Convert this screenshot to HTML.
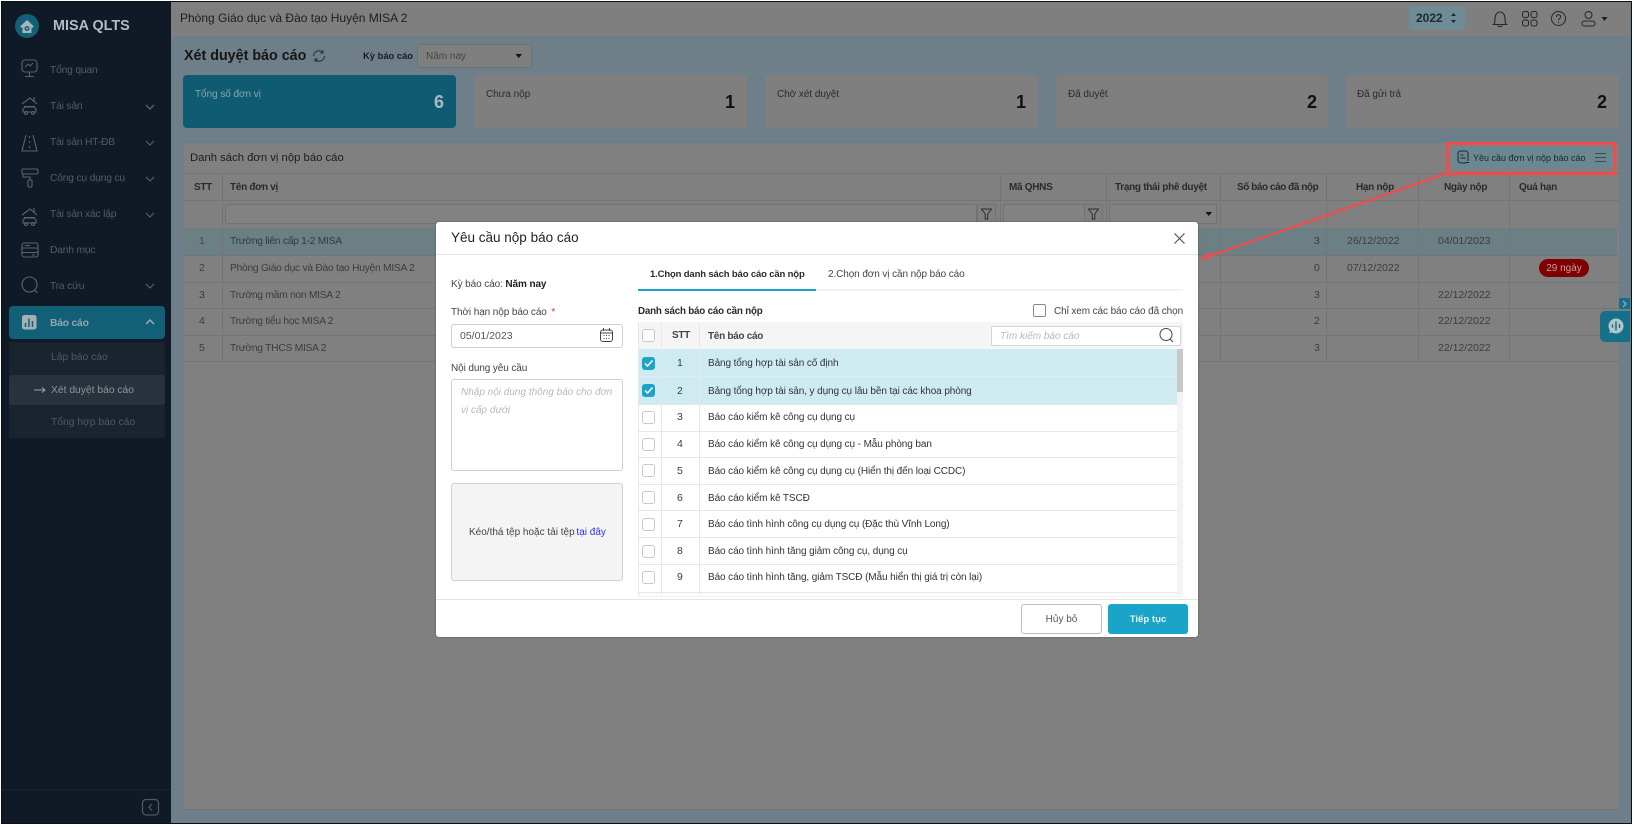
<!DOCTYPE html>
<html lang="vi"><head><meta charset="utf-8"><title>MISA QLTS</title>
<style>
html,body{margin:0;padding:0;background:#fff;width:1634px;height:827px;overflow:hidden}
*{box-sizing:border-box}
body{font-family:"Liberation Sans","Noto Sans CJK SC",sans-serif;font-size:11px;color:#333}
.a,.t{position:absolute}
.t{white-space:nowrap;line-height:14px;height:14px}
svg{position:absolute;overflow:visible}
.m{color:#525c66;font-size:10.3px;letter-spacing:-.2px;line-height:16px}
.h{font-weight:bold;color:#2a2a2a;font-size:10px;letter-spacing:-.3px;line-height:16px}
.r{color:#3c3c3c;font-size:10.3px;letter-spacing:-.28px;line-height:16px}
.d{color:#3c3c3c;font-size:10.5px}
.l{background:#757575;position:absolute}
.card{position:absolute;top:75px;height:53px;background:#7f7f7f;border-radius:4px}
.c{font-size:10px;letter-spacing:-.05px;line-height:16px}
.mt{color:#333;font-size:10px;letter-spacing:-.1px;line-height:16px}
.cb{position:absolute;left:642px;width:13px;height:13px;border:1px solid #c8c8c8;border-radius:3px;background:#fff}
.cb.on{background:#1ba3c9;border-color:#1ba3c9}
.ln{position:absolute;left:638px;width:539px;height:1px;background:#e6e6e6}
</style></head><body>
<div class="a" style="left:1px;top:1px;width:1631px;height:823px;background:#0a0f16;overflow:hidden">
<div class="a" style="left:1px;top:1px;width:1629px;height:821px;background:#6e7f8a"></div>
</div>

<!-- sidebar -->
<div class="a" style="left:2px;top:2px;width:169px;height:821px;background:#0f1a26"></div>
<div class="a" style="left:2px;top:789px;width:169px;height:1px;background:#1a2632"></div>
<div class="a" style="left:15px;top:14px;width:24px;height:24px;border-radius:50%;background:#125f78"></div>
<svg style="left:15px;top:14px" width="24" height="24"><path d="M5.5 12L12 6l6.500 6v1.500H16.500V19H7.500v-5.500H5.500z" fill="#a8b4b8"/><circle cx="12" cy="14.500" r="2.500" fill="#125f78"/><circle cx="12" cy="14.500" r="1" fill="#a8b4b8"/></svg>
<div class="t" style="left:53px;top:18px;font-size:14.400px;font-weight:bold;color:#b4bac0;height:16px;line-height:16px">MISA QLTS</div>

<svg style="left:20px;top:58px" width="20" height="22" fill="none" stroke="#59636c" stroke-width="1.100"><rect x="2" y="2" width="15" height="12" rx="3"/><path d="M5 9l3-3 2 2 3-3M9.500 14v4M5 18.500h9"/></svg>
<div class="t m" style="left:50px;top:63px">Tổng quan</div>
<svg style="left:20px;top:95px" width="20" height="22" fill="none" stroke="#59636c" stroke-width="1.100"><path d="M2 9l8-6 7 6M4 11.500h11M3 14l2-2h9l2 2v3H3zM14 2v4"/><circle cx="6" cy="18" r="1.500"/><circle cx="13" cy="18" r="1.500"/></svg>
<div class="t m" style="left:50px;top:99px">Tài sản</div>
<svg style="left:144px;top:103px" width="12" height="8" fill="none" stroke="#59636c" stroke-width="1.300"><path d="M2 2l4 4 4-4"/></svg>
<svg style="left:20px;top:132px" width="20" height="22" fill="none" stroke="#59636c" stroke-width="1.100"><path d="M6 3L2 19h15L13 3M9.500 4v2M9.500 9v2M9.500 14v2"/></svg>
<div class="t m" style="left:50px;top:135px">Tài sản HT-ĐB</div>
<svg style="left:144px;top:139px" width="12" height="8" fill="none" stroke="#59636c" stroke-width="1.100"><path d="M2 2l4 4 4-4"/></svg>
<svg style="left:20px;top:167px" width="20" height="24" fill="none" stroke="#59636c" stroke-width="1.100"><rect x="2" y="2" width="16" height="5" rx="1.500"/><path d="M3 7v3h7v3"/><rect x="8" y="13" width="4" height="7" rx="1"/></svg>
<div class="t m" style="left:50px;top:171px">Công cụ dụng cụ</div>
<svg style="left:144px;top:175px" width="12" height="8" fill="none" stroke="#59636c" stroke-width="1.100"><path d="M2 2l4 4 4-4"/></svg>
<svg style="left:20px;top:206px" width="20" height="22" fill="none" stroke="#59636c" stroke-width="1.100"><path d="M2 9l8-6 7 6M4 11.500h11M3 14l2-2h9l2 2v3H3zM14 2v4"/><circle cx="6" cy="18" r="1.500"/><circle cx="13" cy="18" r="1.500"/></svg>
<div class="t m" style="left:50px;top:207px">Tài sản xác lập</div>
<svg style="left:144px;top:211px" width="12" height="8" fill="none" stroke="#59636c" stroke-width="1.100"><path d="M2 2l4 4 4-4"/></svg>
<svg style="left:20px;top:241px" width="20" height="20" fill="none" stroke="#59636c" stroke-width="1.100"><rect x="2" y="2" width="16" height="14" rx="2"/><path d="M2 7h16M2 11.500h16M5 4.500h5M12 14h3"/></svg>
<div class="t m" style="left:50px;top:243px">Danh mục</div>
<svg style="left:20px;top:275px" width="20" height="20" fill="none" stroke="#59636c" stroke-width="1.100"><circle cx="9.500" cy="9.500" r="7.500"/><path d="M14.500 15l3 3"/></svg>
<div class="t m" style="left:50px;top:279px">Tra cứu</div>
<svg style="left:144px;top:282px" width="12" height="8" fill="none" stroke="#59636c" stroke-width="1.100"><path d="M2 2l4 4 4-4"/></svg>

<div class="a" style="left:9px;top:306px;width:156px;height:33px;background:#125f78;border-radius:4px"></div>
<svg style="left:22px;top:315px" width="15" height="15"><rect width="14.500" height="14.500" rx="2.500" fill="#a3b0b5"/><path d="M3.500 8v4M7 3.500v8.500M10.500 6v6" stroke="#125f78" stroke-width="1.500" fill="none"/></svg>
<div class="t" style="left:50px;top:317px;font-size:10.300px;color:#93a7ae;font-weight:bold;letter-spacing:-.2px">Báo cáo</div>
<svg style="left:144px;top:318px" width="12" height="8" fill="none" stroke="#a3b0b5" stroke-width="1.400"><path d="M2 6l4-4 4 4"/></svg>
<div class="a" style="left:9px;top:342px;width:156px;height:96px;background:#1a242f"></div>
<div class="a" style="left:9px;top:375px;width:156px;height:30px;background:#29323c;border-radius:3px"></div>
<div class="t" style="left:51px;top:351px;color:#4f5a64;font-size:10.300px">Lập báo cáo</div>
<div class="t" style="left:51px;top:384px;color:#8e959b;font-size:10.300px">Xét duyệt báo cáo</div>
<div class="t" style="left:51px;top:416px;color:#4f5a64;font-size:10.300px">Tổng hợp báo cáo</div>
<svg style="left:34px;top:386px" width="12" height="8" fill="none" stroke="#9aa1a6" stroke-width="1"><path d="M0 4h11M8 1.500L11 4 8 6.500"/></svg>
<svg style="left:142px;top:799px" width="17" height="17" fill="none" stroke="#4e5964" stroke-width="1.200"><rect x=".5" y=".5" width="16" height="15.500" rx="3.500"/><path d="M10 5L7 8.300l3 3.200"/></svg>

<!-- header -->
<div class="a" style="left:171px;top:2px;width:1459px;height:34px;background:#7f7f7f"></div>
<div class="t" style="left:180px;top:11px;font-size:12px;color:#1d1d1d">Phòng Giáo dục và Đào tạo Huyện MISA 2</div>
<div class="a" style="left:1409px;top:6px;width:56px;height:24px;background:#6f8b96;border-radius:3px"></div>
<div class="t" style="left:1416px;top:11px;font-size:12px;font-weight:bold;color:#1d2a30">2022</div>
<svg style="left:1449px;top:12px" width="9" height="13" fill="#1d2a30"><path d="M4.500 1l2.500 3H2zM4.500 11l2.500-3H2z"/></svg>
<svg style="left:1492px;top:9px" width="16" height="20" fill="none" stroke="#252525" stroke-width="1"><path d="M1.500 15.500c1.500-1 1.500-3 1.500-6 0-3.500 2-6.500 5-6.500s5 3 5 6.500c0 3 0 5 1.500 6zM6 16.500c0 1.500 4 1.500 4 0"/></svg>
<svg style="left:1522px;top:11px" width="16" height="16" fill="none" stroke="#252525" stroke-width="1"><rect x=".5" y=".5" width="6" height="6" rx="2"/><rect x="9" y=".5" width="6" height="6" rx="2"/><rect x=".5" y="9" width="6" height="6" rx="2"/><rect x="9" y="9" width="6" height="6" rx="2"/></svg>
<svg style="left:1551px;top:11px" width="16" height="16" fill="none" stroke="#252525" stroke-width="1"><circle cx="7.500" cy="7.500" r="7"/><path d="M5.500 6c0-3 4.200-2.800 4.200-.2 0 1.700-2.200 1.700-2.200 3.600M7.500 10.800v1.200"/></svg>
<svg style="left:1581px;top:11px" width="16" height="16" fill="none" stroke="#252525" stroke-width="1"><circle cx="7.500" cy="4" r="3.500"/><rect x="1" y="10" width="13" height="5" rx="2.500"/></svg>
<svg style="left:1601px;top:17px" width="8" height="5" fill="#1d1d1d"><path d="M.5 0h6L3.500 4z"/></svg>

<!-- page title -->
<div class="t" style="left:184px;top:47px;font-size:14.300px;font-weight:bold;color:#151515;height:18px;line-height:18px">Xét duyệt báo cáo</div>
<svg style="left:312px;top:49px" width="14" height="14" fill="none" stroke="#252f35" stroke-width="1"><path d="M1.500 7a5.500 5.500 0 0 1 9.500-3.500M12.500 7A5.500 5.500 0 0 1 3 10.500"/><path d="M11 1v3H8M3 13v-3h3" stroke-width=".9"/></svg>
<div class="t" style="left:363px;top:49px;font-size:9.400px;font-weight:bold;color:#1a1a1a">Kỳ báo cáo</div>
<div class="a" style="left:417px;top:44px;width:115px;height:24px;background:#7f7f7f;border:1px solid #69737a;border-radius:3px"></div>
<div class="t" style="left:426px;top:50px;font-size:10px;color:#454545">Năm nay</div>
<svg style="left:515px;top:54px" width="8" height="5" fill="#111"><path d="M.5 0h6.500L3.800 4z"/></svg>

<!-- cards -->
<div class="card" style="left:183px;width:273px;background:#0f5b72"></div>
<div class="t c" style="left:195px;top:87px;color:#89a6b0">Tổng số đơn vị</div>
<div class="t" style="left:400px;top:92px;width:44px;text-align:right;font-size:18px;font-weight:bold;color:#a9bcc3;height:20px;line-height:20px">6</div>
<div class="card" style="left:474px;width:273px"></div>
<div class="t c" style="left:486px;top:87px;color:#2b2b2b">Chưa nộp</div>
<div class="t" style="left:690px;top:92px;width:45px;text-align:right;font-size:18px;font-weight:bold;color:#111;height:20px;line-height:20px">1</div>
<div class="card" style="left:765px;width:273px"></div>
<div class="t c" style="left:777px;top:87px;color:#2b2b2b">Chờ xét duyệt</div>
<div class="t" style="left:981px;top:92px;width:45px;text-align:right;font-size:18px;font-weight:bold;color:#111;height:20px;line-height:20px">1</div>
<div class="card" style="left:1056px;width:272px"></div>
<div class="t c" style="left:1068px;top:87px;color:#2b2b2b">Đã duyệt</div>
<div class="t" style="left:1272px;top:92px;width:45px;text-align:right;font-size:18px;font-weight:bold;color:#111;height:20px;line-height:20px">2</div>
<div class="card" style="left:1346px;width:273px"></div>
<div class="t c" style="left:1357px;top:87px;color:#2b2b2b">Đã gửi trả</div>
<div class="t" style="left:1562px;top:92px;width:45px;text-align:right;font-size:18px;font-weight:bold;color:#111;height:20px;line-height:20px">2</div>

<!-- main panel -->
<div class="a" style="left:184px;top:143px;width:1435px;height:667px;background:#808080;border-bottom:1px solid #757575"></div>
<div class="t" style="left:190px;top:151px;font-size:11.300px;color:#1c1c1c">Danh sách đơn vị nộp báo cáo</div>
<div class="a" style="left:1452px;top:147px;width:137px;height:21px;background:#6a8892;border-radius:2px"></div>
<div class="a" style="left:1590px;top:147px;width:22px;height:21px;background:#6a8892;border-radius:2px"></div>
<svg style="left:1457px;top:150px" width="13" height="15" fill="none" stroke="#20282c" stroke-width="1"><path d="M9 13H4a3 3 0 0 1-3-3V3.500A2.500 2.500 0 0 1 3.500 1h5A2.500 2.500 0 0 1 11 3.500V11M3.500 5h3M3.500 8h5M8.500 12.500h3.500"/></svg>
<div class="t" style="left:1473px;top:151px;font-size:9px;color:#20282c">Yêu cầu đơn vị nộp báo cáo</div>
<svg style="left:1595px;top:153px" width="12" height="9" stroke="#3a4a50" fill="none"><path d="M0 .5h11M0 4.500h11M0 8.500h11"/></svg>

<div class="l" style="left:184px;top:173px;width:1435px;height:1px"></div>
<div class="l" style="left:184px;top:200px;width:1435px;height:1px"></div>
<div class="a" style="left:184px;top:228px;width:1433px;height:27px;background:#6b7f85"></div>
<div class="l" style="left:184px;top:282px;width:1435px;height:1px"></div>
<div class="l" style="left:184px;top:255px;width:1435px;height:1px"></div>
<div class="l" style="left:184px;top:308px;width:1435px;height:1px"></div>
<div class="l" style="left:184px;top:335px;width:1435px;height:1px"></div>
<div class="l" style="left:184px;top:361px;width:1435px;height:1px"></div>
<div class="l" style="left:222px;top:173px;width:1px;height:188px"></div>
<div class="l" style="left:1000px;top:173px;width:1px;height:188px"></div>
<div class="l" style="left:1106px;top:173px;width:1px;height:188px"></div>
<div class="l" style="left:1220px;top:173px;width:1px;height:188px"></div>
<div class="l" style="left:1326px;top:173px;width:1px;height:188px"></div>
<div class="l" style="left:1418px;top:173px;width:1px;height:188px"></div>
<div class="l" style="left:1509px;top:173px;width:1px;height:188px"></div>

<div class="t h" style="left:194px;top:180px">STT</div>
<div class="t h" style="left:230px;top:180px">Tên đơn vị</div>
<div class="t h" style="left:1009px;top:180px">Mã QHNS</div>
<div class="t h" style="left:1115px;top:180px">Trạng thái phê duyệt</div>
<div class="t h" style="left:1237px;top:180px;letter-spacing:-.45px">Số báo cáo đã nộp</div>
<div class="t h" style="left:1356px;top:180px">Hạn nộp</div>
<div class="t h" style="left:1444px;top:180px">Ngày nộp</div>
<div class="t h" style="left:1519px;top:180px">Quá hạn</div>

<div class="a" style="left:225px;top:204px;width:752px;height:20px;background:#828282;border:1px solid #737373;border-radius:2px"></div>
<div class="a" style="left:977px;top:204px;width:19px;height:20px;border:1px solid #737373"></div>
<svg style="left:981px;top:208px" width="12" height="12" fill="none" stroke="#2e2e2e"><path d="M.5 1h10L6.800 6v5H4.200V6z"/></svg>
<div class="a" style="left:1003px;top:204px;width:82px;height:20px;background:#828282;border:1px solid #737373"></div>
<div class="a" style="left:1084px;top:204px;width:19px;height:20px;border:1px solid #737373"></div>
<svg style="left:1088px;top:208px" width="12" height="12" fill="none" stroke="#2e2e2e"><path d="M.5 1h10L6.800 6v5H4.200V6z"/></svg>
<div class="a" style="left:1109px;top:204px;width:108px;height:20px;background:#828282;border:1px solid #737373"></div>
<svg style="left:1205px;top:212px" width="8" height="5" fill="#111"><path d="M.5 0h6.500L3.800 4z"/></svg>

<div class="t d" style="left:199px;top:234px;color:#3d4a4e">1</div>
<div class="t r" style="left:230px;top:234px;color:#2e3c40">Trường liên cấp 1-2 MISA</div>
<div class="t d" style="left:199px;top:261px">2</div>
<div class="t r" style="left:230px;top:261px">Phòng Giáo dục và Đào tạo Huyện MISA 2</div>
<div class="t d" style="left:199px;top:288px">3</div>
<div class="t r" style="left:230px;top:288px">Trường mầm non MISA 2</div>
<div class="t d" style="left:199px;top:314px">4</div>
<div class="t r" style="left:230px;top:314px">Trường tiểu học MISA 2</div>
<div class="t d" style="left:199px;top:341px">5</div>
<div class="t r" style="left:230px;top:341px">Trường THCS MISA 2</div>

<div class="t d" style="left:1314px;top:234px">3</div>
<div class="t d" style="left:1314px;top:261px">0</div>
<div class="t d" style="left:1314px;top:288px">3</div>
<div class="t d" style="left:1314px;top:314px">2</div>
<div class="t d" style="left:1314px;top:341px">3</div>
<div class="t d" style="left:1347px;top:234px">26/12/2022</div>
<div class="t d" style="left:1347px;top:261px">07/12/2022</div>
<div class="t d" style="left:1438px;top:234px">04/01/2023</div>
<div class="t d" style="left:1438px;top:288px">22/12/2022</div>
<div class="t d" style="left:1438px;top:314px">22/12/2022</div>
<div class="t d" style="left:1438px;top:341px">22/12/2022</div>
<div class="a" style="left:1539px;top:259px;width:50px;height:18px;border-radius:9px;background:#7e0000"></div>
<div class="t" style="left:1539px;top:262px;width:50px;text-align:center;font-size:10px;color:#c9a0a0">29 ngày</div>

<!-- chat -->
<div class="a" style="left:1619px;top:298px;width:11px;height:11px;background:#17708a;border-radius:2px 0 0 2px"></div>
<svg style="left:1621px;top:300px" width="7" height="8" fill="none" stroke="#a8c0c8"><path d="M2 1l3 3-3 3"/></svg>
<div class="a" style="left:1600px;top:311px;width:30px;height:31px;background:#17708a;border-radius:5px 0 0 5px"></div>
<svg style="left:1608px;top:318px" width="17" height="17"><circle cx="8" cy="8" r="7.500" fill="#b4c6cc"/><path d="M1 15l2-4 3 3z" fill="#b4c6cc"/><path d="M4.500 6.500v3M8 3.500v9M11.500 6v4" stroke="#17708a" stroke-width="1.500"/></svg>

<!-- red box + arrow -->
<svg style="left:0;top:0" width="1634" height="827"><rect x="1447.500" y="143.500" width="167.500" height="30" fill="none" stroke="#f24b4b" stroke-width="3"/><path d="M1446 173.500L1206 257.500" stroke="#f24b4b" stroke-width="2.200"/><path d="M1199 260l10-8 2.500 5.500z" fill="#f24b4b"/></svg>

<!-- modal -->
<div class="a" style="left:436px;top:222px;width:762px;height:415px;background:#fff;border-radius:3px;box-shadow:0 0 2px rgba(0,0,0,.3)"></div>
<div class="a" style="left:436px;top:254px;width:762px;height:1px;background:#e4e4e4"></div>
<div class="t" style="left:451px;top:230px;font-size:13.500px;color:#222;height:16px;line-height:16px">Yêu cầu nộp báo cáo</div>
<svg style="left:1174px;top:233px" width="11" height="11" fill="none" stroke="#555" stroke-width="1.200"><path d="M.5.500l10 10M10.500.500l-10 10"/></svg>

<div class="t mt" style="left:451px;top:277px;color:#444">Kỳ báo cáo: <b style="color:#222">Năm nay</b></div>
<div class="t mt" style="left:451px;top:305px;color:#444">Thời hạn nộp báo cáo <span style="color:#e63030;margin-left:2px">*</span></div>
<div class="a" style="left:451px;top:324px;width:172px;height:24px;border:1px solid #cfcfcf;border-radius:3px"></div>
<div class="t d" style="left:460px;top:329px;color:#555">05/01/2023</div>
<svg style="left:600px;top:328px" width="14" height="15" fill="none" stroke="#444"><rect x=".5" y="2" width="12" height="11.500" rx="2.500"/><path d="M3.500 0v3M9.500 0v3M.5 5h12M3.500 7.500h1M6 7.500h1M8.500 7.500h1M3.500 10.500h1M6 10.500h1M8.500 10.500h1"/></svg>
<div class="t mt" style="left:451px;top:361px;color:#444">Nội dung yêu cầu</div>
<div class="a" style="left:451px;top:379px;width:172px;height:92px;border:1px solid #cfcfcf;border-radius:3px"></div>
<div class="t" style="left:461px;top:386px;font-size:10px;font-style:italic;color:#b8b8b8">Nhập nội dung thông báo cho đơn</div>
<div class="t" style="left:461px;top:404px;font-size:10px;font-style:italic;color:#b8b8b8">vị cấp dưới</div>
<div class="a" style="left:451px;top:483px;width:172px;height:98px;background:#f4f4f4;border:1px solid #cfcfcf;border-radius:3px"></div>
<div class="t" style="left:469px;top:526px;font-size:10px;color:#444">Kéo/thá tệp hoặc tải tệp <span style="color:#3232e6;margin-left:-1px">tại đây</span></div>

<div class="t" style="left:650px;top:268px;font-size:9.500px;color:#2a2a2a;font-weight:bold;letter-spacing:-.15px">1.Chọn danh sách báo cáo cần nộp</div>
<div class="t mt" style="left:828px;top:267px;color:#444">2.Chọn đơn vị cần nộp báo cáo</div>
<div class="a" style="left:638px;top:289px;width:545px;height:2px;background:#f2f2f2"></div>
<div class="a" style="left:638px;top:289px;width:178px;height:2px;background:#1ba3c9"></div>
<div class="t" style="left:638px;top:305px;font-size:9.800px;font-weight:bold;color:#2a2a2a;letter-spacing:-.2px">Danh sách báo cáo cần nộp</div>
<div class="a" style="left:1033px;top:304px;width:13px;height:13px;border:1px solid #888;border-radius:2px"></div>
<div class="t c" style="left:1054px;top:304px;color:#444;letter-spacing:-.1px">Chỉ xem các báo cáo đã chọn</div>

<div class="a" style="left:638px;top:322px;width:545px;height:27px;background:#f5f5f5"></div>
<div class="a" style="left:638px;top:349px;width:539px;height:55px;background:#cfebf2"></div>
<div class="a" style="left:1177px;top:349px;width:6px;height:246px;background:#f3f3f3"></div>
<div class="a" style="left:1177px;top:349px;width:6px;height:43px;background:#c9c9c9"></div>
<div class="a" style="left:638px;top:322px;width:1px;height:274px;background:#e8e8e8"></div>
<div class="a" style="left:661px;top:322px;width:1px;height:273px;background:#e8e8e8"></div>
<div class="a" style="left:699px;top:322px;width:1px;height:273px;background:#e8e8e8"></div>
<div class="ln" style="top:376px;background:#d8eef4"></div>
<div class="ln" style="top:404px"></div>
<div class="ln" style="top:431px"></div>
<div class="ln" style="top:457px"></div>
<div class="ln" style="top:484px"></div>
<div class="ln" style="top:510px"></div>
<div class="ln" style="top:537px"></div>
<div class="ln" style="top:564px"></div>
<div class="ln" style="top:592px"></div>
<div class="a" style="left:638px;top:596px;width:545px;height:1px;background:#eee"></div>

<div class="cb" style="top:329px"></div>
<div class="t h" style="left:672px;top:328px;color:#444">STT</div>
<div class="t h" style="left:708px;top:329px;color:#444">Tên báo cáo</div>
<div class="a" style="left:991px;top:326px;width:190px;height:20px;background:#fff;border:1px solid #d4d4d4;border-radius:2px"></div>
<div class="t" style="left:1000px;top:330px;font-size:10px;font-style:italic;color:#b8b8b8">Tìm kiếm báo cáo</div>
<svg style="left:1159px;top:328px" width="16" height="15" fill="none" stroke="#444"><circle cx="7" cy="6.500" r="6"/><path d="M11 11l3 3"/></svg>

<div class="cb on" style="top:357px"></div><svg style="left:644px;top:359px" width="10" height="9" fill="none" stroke="#fff" stroke-width="1.500"><path d="M1 4.500l2.500 2.500L8.500 1.500"/></svg>
<div class="cb on" style="top:384px"></div><svg style="left:644px;top:386px" width="10" height="9" fill="none" stroke="#fff" stroke-width="1.500"><path d="M1 4.500l2.500 2.500L8.500 1.500"/></svg>
<div class="cb" style="top:411px"></div>
<div class="cb" style="top:438px"></div>
<div class="cb" style="top:464px"></div>
<div class="cb" style="top:491px"></div>
<div class="cb" style="top:518px"></div>
<div class="cb" style="top:545px"></div>
<div class="cb" style="top:571px"></div>

<div class="t d" style="left:677px;top:356px">1</div><div class="t mt" style="left:708px;top:356px">Bảng tổng hợp tài sản cố định</div>
<div class="t d" style="left:677px;top:384px">2</div><div class="t mt" style="left:708px;top:384px">Bảng tổng hợp tài sản, y dụng cụ lâu bền tại các khoa phòng</div>
<div class="t d" style="left:677px;top:410px">3</div><div class="t mt" style="left:708px;top:410px">Báo cáo kiểm kê công cụ dụng cụ</div>
<div class="t d" style="left:677px;top:437px">4</div><div class="t mt" style="left:708px;top:437px">Báo cáo kiểm kê công cụ dụng cụ - Mẫu phòng ban</div>
<div class="t d" style="left:677px;top:464px">5</div><div class="t mt" style="left:708px;top:464px">Báo cáo kiểm kê công cụ dụng cụ (Hiển thị đến loại CCDC)</div>
<div class="t d" style="left:677px;top:491px">6</div><div class="t mt" style="left:708px;top:491px">Báo cáo kiểm kê TSCĐ</div>
<div class="t d" style="left:677px;top:517px">7</div><div class="t mt" style="left:708px;top:517px">Báo cáo tình hình công cụ dụng cụ (Đặc thù Vĩnh Long)</div>
<div class="t d" style="left:677px;top:544px">8</div><div class="t mt" style="left:708px;top:544px">Báo cáo tình hình tăng giảm công cụ, dụng cụ</div>
<div class="t d" style="left:677px;top:570px">9</div><div class="t mt" style="left:708px;top:570px">Báo cáo tình hình tăng, giảm TSCĐ (Mẫu hiển thị giá trị còn lại)</div>

<div class="a" style="left:436px;top:599px;width:762px;height:1px;background:#e4e4e4"></div>
<div class="a" style="left:1021px;top:604px;width:81px;height:30px;background:#fff;border:1px solid #bdbdbd;border-radius:3px"></div>
<div class="t" style="left:1021px;top:613px;width:81px;text-align:center;font-size:10px;color:#555">Hủy bỏ</div>
<div class="a" style="left:1108px;top:604px;width:80px;height:30px;background:#1aa4c8;border-radius:3px"></div>
<div class="t" style="left:1108px;top:613px;width:80px;text-align:center;font-size:9.600px;font-weight:bold;color:#e8f6fa">Tiếp tục</div>
</body></html>
